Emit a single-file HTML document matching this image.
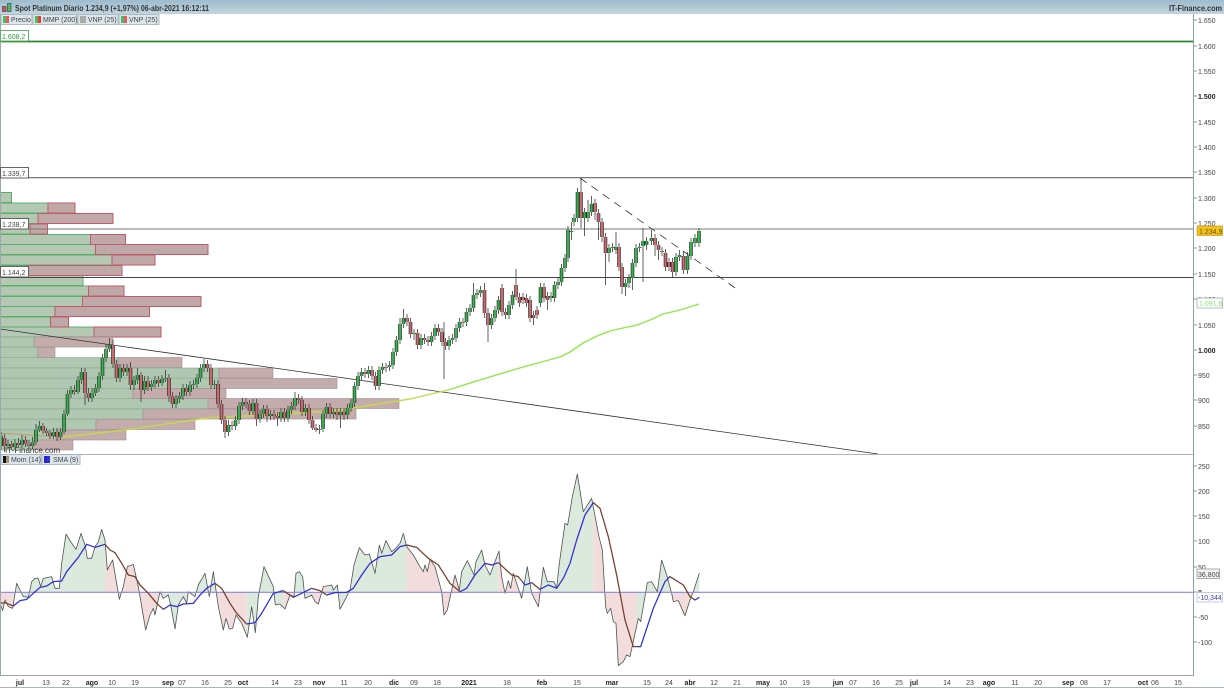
<!DOCTYPE html>
<html><head><meta charset="utf-8"><title>Spot Platinum</title>
<style>
html,body{margin:0;padding:0;background:#fff;width:1224px;height:688px;overflow:hidden}
svg{display:block;filter:blur(.28px)}
text{font-family:"Liberation Sans",Arial,sans-serif;font-size:7px;fill:#444}
.b{font-weight:bold;fill:#222}
.c text{text-anchor:middle}
.ax line{stroke:#8a9aa5;stroke-width:1}
</style></head><body>
<svg width="1224" height="688" viewBox="0 0 1224 688" xmlns="http://www.w3.org/2000/svg">
<defs>
<linearGradient id="hd" x1="0" y1="0" x2="0" y2="1"><stop offset="0" stop-color="#9dbccd"/><stop offset="1" stop-color="#c2d5df"/></linearGradient>
<clipPath id="top"><rect x="0" y="0" width="1194" height="454"/></clipPath>
<clipPath id="br"><rect x="0" y="0" width="40" height="700"/><rect x="315" y="0" width="175" height="700"/><rect x="645" y="0" width="95" height="700"/><rect x="850" y="0" width="30" height="700"/><rect x="935" y="0" width="45" height="700"/><rect x="1220" y="0" width="160" height="700"/><rect x="1495" y="0" width="70" height="700"/><rect x="1595" y="0" width="25" height="700"/><rect x="1780" y="0" width="130" height="700"/><rect x="2010" y="0" width="75" height="700"/></clipPath>
<clipPath id="bl"><rect x="40" y="0" width="275" height="700"/><rect x="490" y="0" width="155" height="700"/><rect x="740" y="0" width="110" height="700"/><rect x="880" y="0" width="55" height="700"/><rect x="980" y="0" width="240" height="700"/><rect x="1380" y="0" width="115" height="700"/><rect x="1565" y="0" width="30" height="700"/><rect x="1620" y="0" width="160" height="700"/><rect x="1910" y="0" width="100" height="700"/><rect x="2085" y="0" width="20" height="700"/></clipPath>
<path id="mom" d="M0 460L8 482 15 450 25 470 38 475 50 400 60 420 70 440 85 442 95 395 105 385 115 385 122 410 130 385 155 380 165 415 178 415 185 340 198 252 212 275 228 298 243 250 255 285 262 325 275 325 285 290 295 275 305 238 315 270 322 360 338 330 358 448 370 410 382 350 400 343 415 410 437 540 450 495 460 475 465 495 480 425 490 445 505 435 512 465 525 537 535 465 550 440 560 460 565 425 585 440 595 405 615 370 628 440 640 365 655 470 670 540 678 505 688 537 698 535 708 495 725 520 742 562 755 470 766 548 775 440 792 350 820 410 826 465 840 462 855 477 870 435 882 440 888 370 898 365 908 380 915 445 935 435 945 455 955 462 970 410 995 405 1000 420 1012 405 1020 478 1040 440 1050 420 1062 345 1078 293 1095 315 1108 312 1125 370 1138 285 1145 310 1158 272 1175 305 1185 297 1200 280 1210 250 1220 290 1240 315 1260 350 1270 365 1275 345 1282 365 1290 328 1305 350 1325 425 1332 495 1342 480 1365 375 1378 420 1385 365 1402 332 1422 375 1428 335 1445 300 1455 345 1470 375 1497 303 1505 380 1515 430 1525 392 1532 415 1540 370 1565 445 1582 350 1595 430 1615 470 1630 352 1642 395 1662 395 1670 415 1678 340 1695 220 1703 225 1717 140 1732 72 1750 185 1775 145 1797 260 1807 300 1817 470 1822 490 1832 475 1840 515 1848 520 1855 647 1870 635 1880 615 1890 620 1915 505 1922 515 1942 398 1955 395 1972 425 1985 330 2000 375 2015 430 2020 455 2035 452 2055 497 2070 450 2080 425 2098 370"/>
<path id="sma" d="M0 460L15 458 40 468 60 452 80 448 100 430 120 412 140 408 160 395 185 393 200 365 235 322 260 283 285 292 315 283 330 300 345 308 365 340 385 375 405 380 420 405 445 430 470 460 490 478 510 465 530 470 550 462 580 460 600 435 620 415 645 400 665 415 690 460 710 490 740 522 765 518 785 490 820 430 850 422 880 442 905 430 935 415 960 422 980 435 1005 428 1040 427 1060 415 1085 375 1110 340 1140 320 1175 315 1200 290 1220 285 1250 292 1285 325 1315 345 1350 400 1380 425 1400 415 1425 375 1455 340 1475 345 1495 338 1535 375 1555 380 1575 405 1595 398 1620 418 1645 405 1670 415 1690 385 1710 340 1730 270 1755 195 1780 158 1800 175 1825 260 1850 375 1875 510 1900 590 1922 590 1960 475 1995 395 2010 380 2050 405 2070 440 2085 450 2098 442"/>
<path id="momfill" d="M0 427L0 460 8 482 15 450 25 470 38 475 50 400 60 420 70 440 85 442 95 395 105 385 115 385 122 410 130 385 155 380 165 415 178 415 185 340 198 252 212 275 228 298 243 250 255 285 262 325 275 325 285 290 295 275 305 238 315 270 322 360 338 330 358 448 370 410 382 350 400 343 415 410 437 540 450 495 460 475 465 495 480 425 490 445 505 435 512 465 525 537 535 465 550 440 560 460 565 425 585 440 595 405 615 370 628 440 640 365 655 470 670 540 678 505 688 537 698 535 708 495 725 520 742 562 755 470 766 548 775 440 792 350 820 410 826 465 840 462 855 477 870 435 882 440 888 370 898 365 908 380 915 445 935 435 945 455 955 462 970 410 995 405 1000 420 1012 405 1020 478 1040 440 1050 420 1062 345 1078 293 1095 315 1108 312 1125 370 1138 285 1145 310 1158 272 1175 305 1185 297 1200 280 1210 250 1220 290 1240 315 1260 350 1270 365 1275 345 1282 365 1290 328 1305 350 1325 425 1332 495 1342 480 1365 375 1378 420 1385 365 1402 332 1422 375 1428 335 1445 300 1455 345 1470 375 1497 303 1505 380 1515 430 1525 392 1532 415 1540 370 1565 445 1582 350 1595 430 1615 470 1630 352 1642 395 1662 395 1670 415 1678 340 1695 220 1703 225 1717 140 1732 72 1750 185 1775 145 1797 260 1807 300 1817 470 1822 490 1832 475 1840 515 1848 520 1855 647 1870 635 1880 615 1890 620 1915 505 1922 515 1942 398 1955 395 1972 425 1985 330 2000 375 2015 430 2020 455 2035 452 2055 497 2070 450 2080 425 2098 370 2098 427Z"/>
<path id="g" d="M1 436V446M8 444V446M15 443V447M22 440V445M32.500 442V446M36 430V442M39.500 426V430M53.500 432V436M60.500 432V437M64 414V432M67.500 394V414M71 390V394M78 380V392M81.500 372V380M92 393V398M95.500 388V393M99 376V388M102.500 358V376M106 349V358M109.500 345V349M120 368V378M127 368V372M134 380V385M137.500 375V380M144.500 381V390M151.500 384V387M155 380V384M162 379V383M165.500 378V379M176 399V404M179.500 396V399M183 388V396M190 385V392M193.500 384V385M197 378V384M200.500 368V378M204 364V368M214.500 384V385M228.500 425V432M235.500 420V426M239 406V420M242.500 402V406M253 403V411M260 414V419M263.500 409V414M270.500 414V416M281 412V418M288 410V418M291.500 406V410M295 398V406M305.500 408V412M319.500 429V430M323 414V429M326.500 407V414M333.500 412V414M340.500 412V415M347.500 408V415M351 403V408M354.500 386V403M358 376V386M361.500 372V376M368.500 370V374M379 370V386M382.500 367V370M389.500 365V367M393 352V365M396.500 340V352M400 324V340M403.500 318V324M414 333V334M421 338V345M431.500 336V342M435 328V336M449 340V346M452.500 338V340M456 328V338M459.500 322V328M466.500 312V322M470 308V312M473.500 295V308M477 293V295M480.500 290V293M491.500 318V325M495 310V318M498.500 300V310M509 305V315M512.500 295V305M540.500 287V303M551 296V298M554.500 285V298M558 282V285M561.500 268V282M565 258V268M568 230V258M571.500 231V232M574 218V222M577.500 192V218M584.500 212V218M588 212V218M591.500 204V212M609 248V253M612.500 247V248M616 247V250M625.500 283V287M629 278V283M632.500 263V278M636 248V263M639.500 247V248M643 241V246M646.500 241V245M651.500 238V241M662 251V252M676 257V272M679.500 255V257M687.500 256V270M691 242V256M695 238V243M699 231V243"/>
<path id="r" d="M4.500 438V446M11.500 444V447M18.500 443V445M25.500 440V444M29 444V446M43 426V431M46.500 431V433M50 433V436M57 432V437M74.500 390V392M85 372V393M88.500 393V398M113 345V364M116.500 364V378M123.500 368V372M130.500 368V385M141 375V390M148 381V387M158.500 380V383M169 378V396M172.500 396V404M186.500 388V392M207.500 364V368M211 368V385M218 384V404M221.500 404V420M225 420V432M232 425V426M246 402V404M249.500 404V411M256.500 403V419M267 409V416M274 414V416M277.500 416V418M284.500 412V418M298.500 398V400M302 400V412M309 408V420M312.500 420V428M316 428V430M330 407V414M337 412V415M344 412V415M365 372V374M372 370V376M375.500 376V386M386 367V368M407 318V322M410.500 322V334M417.500 333V345M424.500 338V340M428 340V342M438.500 328V332M442 332V342M445.500 342V346M463 322V323M484.500 290V313M488 313V325M502 288V312M505.500 312V315M516 285V297M519.500 297V303M523 297V300M526.500 298V303M530 300V318M533.500 315V318M537 310V315M544 287V298M547.500 296V300M581 192V218M595 203V212M598.500 213V222M602 222V237M605.500 237V253M619 247V267M622 267V287M655 238V245M658.500 245V250M665.500 253V267M669 262V267M672.500 262V272M683.500 256V270"/>
</defs>

<!-- price panel -->
<g clip-path="url(#top)">
<g stroke-width="1">
<g fill="#b4c8b4" stroke="#58b068"><rect x="-2" y="192.500" width="13.500" height="10"/><rect x="-2" y="203" width="50" height="10"/><rect x="-2" y="213.500" width="40" height="10"/><rect x="-2" y="224" width="32" height="10"/><rect x="-2" y="234.500" width="92.500" height="10"/><rect x="-2" y="244.500" width="97.500" height="10"/><rect x="-2" y="255" width="114" height="10"/><rect x="-2" y="265.500" width="30" height="10"/><rect x="-2" y="275.500" width="85" height="10"/><rect x="-2" y="286" width="90.500" height="10"/><rect x="-2" y="296.500" width="84.500" height="10"/><rect x="-2" y="306.500" width="57" height="10"/><rect x="-2" y="317" width="52.500" height="10"/><rect x="-2" y="327" width="96" height="10"/></g>
<g fill="#bfa8a8" stroke="#c05a68"><rect x="48" y="203" width="27" height="10"/><rect x="38" y="213.500" width="75" height="10"/><rect x="30" y="224" width="17.500" height="10"/><rect x="90.500" y="234.500" width="35" height="10"/><rect x="95.500" y="244.500" width="112.500" height="10"/><rect x="112" y="255" width="43" height="10"/><rect x="28" y="265.500" width="94" height="10"/><rect x="88.500" y="286" width="35.500" height="10"/><rect x="82.500" y="296.500" width="118.500" height="10"/><rect x="55" y="306.500" width="94.500" height="10"/><rect x="50.500" y="317" width="18" height="10"/><rect x="94" y="327" width="67" height="10"/></g>
<g fill="#b0c7b2" stroke="#8cae90" stroke-width=".6"><rect x="-2" y="337" width="36" height="10"/><rect x="-2" y="347.500" width="40" height="10"/><rect x="-2" y="357.500" width="120" height="10"/><rect x="-2" y="368" width="221" height="10"/><rect x="-2" y="378.500" width="222" height="10"/><rect x="-2" y="388.500" width="135" height="10"/><rect x="-2" y="398.500" width="210" height="10"/><rect x="-2" y="409" width="145" height="10"/><rect x="-2" y="419.500" width="98" height="10"/><rect x="-2" y="430" width="60" height="10"/><rect x="-2" y="440" width="36" height="10"/></g>
<g fill="#c4acac" stroke="#a08a8a" stroke-width=".6"><rect x="34" y="337" width="79" height="10"/><rect x="38" y="347.500" width="17" height="10"/><rect x="118" y="357.500" width="64" height="10"/><rect x="219" y="368" width="54" height="10"/><rect x="220" y="378.500" width="117" height="10"/><rect x="133" y="388.500" width="93" height="10"/><rect x="208" y="398.500" width="191" height="10"/><rect x="143" y="409" width="213" height="10"/><rect x="96" y="419.500" width="99" height="10"/><rect x="58" y="430" width="68" height="10"/><rect x="34" y="440" width="39" height="10"/></g>
</g>
<text x="5" y="453" style="font-size:8px;fill:#333">IT-Finance.com</text>

<!-- horizontal lines -->
<line x1="0" y1="41.500" x2="1194" y2="41.500" stroke="#1f8a2e" stroke-width="1.800"/>
<line x1="0" y1="177.700" x2="1194" y2="177.700" stroke="#666" stroke-width="1.100"/>
<line x1="0" y1="229" x2="1194" y2="229" stroke="#777" stroke-width="1.100"/>
<line x1="0" y1="277.500" x2="1194" y2="277.500" stroke="#444" stroke-width=".9"/>
<line x1="0" y1="329" x2="878" y2="454" stroke="#333" stroke-width=".8"/>
<line x1="580" y1="178" x2="738" y2="290" stroke="#333" stroke-width=".8" stroke-dasharray="8 6"/>

<!-- MMP -->
<polyline fill="none" stroke="#bf9a6a" stroke-width="1" points="0,433 30,435 62,437"/>
<polyline fill="none" stroke="#c5d84a" stroke-width="1.400" stroke-linejoin="round" points="62,437 125,430 207,418 300,413 340,410 410,399 448,390"/>
<polyline fill="none" stroke="#8fe84a" stroke-width="1.400" stroke-linejoin="round" points="448,390 483,379 523,367 560,357 570,352 583,343 597,336 610,331 623,328 637,325 650,320 663,314 680,310 699,304"/>

<!-- wicks -->
<path fill="none" stroke="#3a3a3a" stroke-width=".8" d="M1 432V450M4.500 434V452M8 440V449M11.500 441V450M15 439V450M18.500 438V447M22 435V448M25.500 436V447M29 440V449M32.500 437V449M36 424V445M39.500 421V432M43 423V434M46.500 428V436M50 430V439M53.500 428V439M57 428V441M60.500 428V440M64 410V434M67.500 390V416M71 386V398M74.500 385V395M78 376V394M81.500 368V384M85 368V405M88.500 388V402M92 388V402M95.500 384V396M99 372V392M102.500 354V380M106 344V362M109.500 338V352M113 340V368M116.500 360V382M120 364V382M123.500 364V376M127 364V376M130.500 362V390M134 376V390M137.500 368V384M141 372V402M144.500 376V394M148 376V391M151.500 380V391M155 376V388M158.500 376V387M162 375V386M165.500 370V382M169 374V402M172.500 392V408M176 395V408M179.500 392V403M183 384V400M186.500 384V396M190 381V396M193.500 380V389M197 374V388M200.500 364V382M204 359V372M207.500 360V372M211 364V389M214.500 380V389M218 380V408M221.500 400V424M225 416V438M228.500 420V436M232 421V430M235.500 416V430M239 402V424M242.500 398V410M246 398V408M249.500 400V415M253 399V415M256.500 399V426M260 410V423M263.500 405V418M267 405V422M270.500 410V420M274 410V420M277.500 412V426M281 408V422M284.500 408V422M288 406V422M291.500 402V414M295 392V410M298.500 394V404M302 396V416M305.500 404V416M309 404V424M312.500 416V430M316 424V432M319.500 425V434M323 410V432M326.500 403V418M330 403V418M333.500 408V418M337 408V420M340.500 408V428M344 408V420M347.500 404V419M351 399V412M354.500 382V407M358 372V390M361.500 368V380M365 368V378M368.500 366V378M372 366V380M375.500 372V390M379 366V390M382.500 363V374M386 363V372M389.500 361V371M393 348V369M396.500 336V356M400 318V344M403.500 309V328M407 314V326M410.500 318V338M414 329V340M417.500 329V349M421 334V349M424.500 334V344M428 336V346M431.500 332V346M435 324V340M438.500 324V336M442 328V346M445.500 338V350M444 322V379M449 336V350M452.500 334V344M456 324V342M459.500 318V332M463 318V327M466.500 308V326M470 304V316M473.500 283V312M477 289V299M480.500 286V297M484.500 283V318M488 308V342M491.500 314V329M495 306V322M498.500 296V314M502 284V316M505.500 308V319M509 301V319M512.500 291V309M516 269V300M519.500 293V307M523 293V304M526.500 294V307M530 296V322M533.500 311V325M537 306V319M540.500 283V307M544 283V302M547.500 292V310M551 292V302M554.500 281V302M558 278V289M561.500 264V286M565 254V272M568 226V262M571.500 222V240M574 214V226M577.500 188V222M581 178V228M584.500 208V236M588 200V222M591.500 196V216M595 199V220M598.500 209V240M602 218V242M605.500 233V285M609 244V262M612.500 243V252M616 232V254M619 243V271M622 263V294M625.500 279V296M629 274V288M632.500 259V290M636 244V267M639.500 243V252M643 228V282M646.500 237V250M651.500 230V245M655 234V256M658.500 241V260M662 247V256M665.500 249V271M669 258V271M672.500 258V278M676 253V276M679.500 250V261M683.500 252V274M687.500 252V274M691 238V260M695 234V247M699 228V247"/>
<!-- bodies -->
<g fill="none">
<use href="#g" stroke="#161616" stroke-width="3.500"/>
<use href="#r" stroke="#161616" stroke-width="3.500"/>
<use href="#g" stroke="#38b050" stroke-width="2.300"/>
<use href="#r" stroke="#c86a70" stroke-width="2.300"/>
</g>
</g>

<!-- momentum panel -->
<line x1="0" y1="454.500" x2="1194" y2="454.500" stroke="#a9b3b9" stroke-width="1"/>
<g transform="translate(0,450) scale(.33333)">
<g clip-path="url(#bl)"><use href="#momfill" fill="#dbeadc"/></g>
<g clip-path="url(#br)"><use href="#momfill" fill="#f3dcdc"/></g>
<use href="#mom" fill="none" stroke="#4c5450" stroke-width="2.400" stroke-linejoin="round"/>
<line x1="0" y1="427" x2="3582" y2="427" stroke="#8b86d8" stroke-width="3.600"/>
<g clip-path="url(#bl)"><use href="#sma" fill="none" stroke="#3030d4" stroke-width="3.800" stroke-linejoin="round"/></g>
<g clip-path="url(#br)"><use href="#sma" fill="none" stroke="#74402c" stroke-width="3.800" stroke-linejoin="round"/></g>
</g>

<!-- frame -->
<rect x="0" y="0" width="1224" height="14" fill="url(#hd)"/>
<line x1=".5" y1="14" x2=".5" y2="676" stroke="#9aa8b0"/>
<line x1="1193.500" y1="14" x2="1193.500" y2="676" stroke="#8f9fa9"/>
<line x1="0" y1="675.500" x2="1193" y2="675.500" stroke="#9aa8b0"/>
<line x1="0" y1="687.500" x2="1224" y2="687.500" stroke="#aab6bd"/>

<!-- header -->
<rect x="2.500" y="6.500" width="3.500" height="5" fill="#e05060" stroke="#444" stroke-width=".7"/>
<rect x="7.500" y="3.500" width="3.500" height="8" fill="#40c060" stroke="#444" stroke-width=".7"/>
<text x="15" y="11" textLength="194" lengthAdjust="spacingAndGlyphs" style="font-size:8px;font-weight:bold;fill:#333">Spot Platinum Diario 1.234,9 (+1,97%) 06-abr-2021 16:12:11</text>
<text x="1169" y="11" textLength="53" lengthAdjust="spacingAndGlyphs" style="font-size:8px;font-weight:bold;fill:#333">IT-Finance.com</text>

<!-- legends -->
<g fill="#dce6ec" stroke="#9fb0ba" stroke-width=".8"><rect x="1" y="14.500" width="31" height="10"/><rect x="33" y="14.500" width="44" height="10"/><rect x="78" y="14.500" width="40" height="10"/><rect x="119" y="14.500" width="40" height="10"/></g>
<rect x="3" y="16" width="3" height="7" fill="#4dbb60"/><rect x="6" y="16" width="3" height="7" fill="#ea5a5a"/>
<rect x="35" y="16" width="3" height="7" fill="#4dbb60"/><rect x="38" y="16" width="3" height="7" fill="#ea3a3a"/>
<rect x="80" y="16" width="6" height="7" fill="#aaa"/>
<rect x="121" y="16" width="3" height="7" fill="#4dbb60"/><rect x="124" y="16" width="3" height="7" fill="#ea5a5a"/>
<text x="11" y="22">Precio</text><text x="43" y="22">MMP (200)</text><text x="88" y="22">VNP (25)</text><text x="129" y="22">VNP (25)</text>
<g fill="#dce6ec" stroke="#9fb0ba" stroke-width=".8"><rect x="1" y="454.500" width="40" height="10"/><rect x="42" y="454.500" width="38" height="10"/></g>
<rect x="3" y="456" width="3" height="7" fill="#111"/><rect x="6" y="456" width="3" height="7" fill="#a89070"/>
<rect x="44" y="456" width="3" height="7" fill="#2222dd"/><rect x="47" y="456" width="3" height="7" fill="#3333cc"/>
<text x="11" y="462">Mom (14)</text><text x="53" y="462">SMA (9)</text>

<!-- left labels -->
<g fill="#fff" stroke-width=".9">
<rect x=".5" y="30.500" width="28" height="10.500" stroke="#55a860"/>
<rect x=".5" y="167.500" width="28" height="10.500" stroke="#555"/>
<rect x=".5" y="218.500" width="28" height="10.500" stroke="#555"/>
<rect x=".5" y="266.500" width="28" height="10.500" stroke="#555"/>
</g>
<text x="2" y="39" style="fill:#2e9a40">1.608,2</text>
<text x="2" y="176">1.339,7</text>
<text x="2" y="227">1.238,7</text>
<text x="2" y="275">1.144,2</text>

<!-- y axis -->
<g class="ax">
<line x1="1194" x2="1197" y1="20" y2="20"/><line x1="1194" x2="1197" y1="46" y2="46"/><line x1="1194" x2="1197" y1="71" y2="71"/><line x1="1194" x2="1197" y1="96" y2="96"/><line x1="1194" x2="1197" y1="122" y2="122"/><line x1="1194" x2="1197" y1="147" y2="147"/><line x1="1194" x2="1197" y1="172" y2="172"/><line x1="1194" x2="1197" y1="198" y2="198"/><line x1="1194" x2="1197" y1="223" y2="223"/><line x1="1194" x2="1197" y1="248" y2="248"/><line x1="1194" x2="1197" y1="274" y2="274"/><line x1="1194" x2="1197" y1="299" y2="299"/><line x1="1194" x2="1197" y1="325" y2="325"/><line x1="1194" x2="1197" y1="350" y2="350"/><line x1="1194" x2="1197" y1="375" y2="375"/><line x1="1194" x2="1197" y1="400" y2="400"/><line x1="1194" x2="1197" y1="426" y2="426"/>
<line x1="1194" x2="1197" y1="466" y2="466"/><line x1="1194" x2="1197" y1="491" y2="491"/><line x1="1194" x2="1197" y1="516" y2="516"/><line x1="1194" x2="1197" y1="541" y2="541"/><line x1="1194" x2="1197" y1="567" y2="567"/><line x1="1194" x2="1197" y1="592" y2="592"/><line x1="1194" x2="1197" y1="617" y2="617"/><line x1="1194" x2="1197" y1="642" y2="642"/>
</g>
<text x="1198" y="23">1.650</text><text x="1198" y="49">1.600</text><text x="1198" y="74">1.550</text><text x="1198" y="99" class="b">1.500</text><text x="1198" y="125">1.450</text><text x="1198" y="150">1.400</text><text x="1198" y="175">1.350</text><text x="1198" y="201">1.300</text><text x="1198" y="226">1.250</text><text x="1198" y="251">1.200</text><text x="1198" y="277">1.150</text><text x="1198" y="302">1.100</text><text x="1198" y="328">1.050</text><text x="1198" y="353" class="b">1.000</text><text x="1198" y="378">950</text><text x="1198" y="403">900</text><text x="1198" y="429">850</text>
<text x="1198" y="469">250</text><text x="1198" y="494">200</text><text x="1198" y="519">150</text><text x="1198" y="544">100</text><text x="1198" y="570">50</text><text x="1198" y="595" class="b">0</text><text x="1198" y="620">-50</text><text x="1198" y="645">-100</text>

<rect x="1197" y="226" width="25.500" height="9.500" fill="#f4c21c" stroke="#c09a20" stroke-width=".7"/>
<text x="1199" y="234" style="fill:#6a5400">1.234,9</text>
<rect x="1197" y="298" width="25.500" height="10" fill="#fff" stroke="#9fb0a8" stroke-width=".8"/>
<text x="1199" y="306" style="fill:#88e878">1.091,8</text>
<rect x="1197" y="569" width="22.500" height="9.500" fill="#f4f4f4" stroke="#999" stroke-width=".8"/>
<text x="1198" y="577">36,800</text>
<rect x="1197" y="592.500" width="25.500" height="9.500" fill="#fff" stroke="#b8c0e0" stroke-width=".8"/>
<text x="1198" y="600" style="fill:#3a3ad0">-10,344</text>

<!-- x axis -->
<g class="c">
<text x="20" y="685" class="b">jul</text><text x="46" y="685">13</text><text x="66" y="685">22</text><text x="92" y="685" class="b">ago</text><text x="112" y="685">10</text><text x="135" y="685">19</text><text x="168" y="685" class="b">sep</text><text x="182" y="685">07</text><text x="205" y="685">16</text><text x="228" y="685">25</text><text x="243" y="685" class="b">oct</text><text x="275" y="685">14</text><text x="298" y="685">23</text><text x="319" y="685" class="b">nov</text><text x="344" y="685">11</text><text x="368" y="685">20</text><text x="394" y="685" class="b">dic</text><text x="414" y="685">09</text><text x="437" y="685">18</text><text x="469" y="685" class="b">2021</text><text x="507" y="685">18</text><text x="542" y="685" class="b">feb</text><text x="577" y="685">15</text><text x="612" y="685" class="b">mar</text><text x="647" y="685">15</text><text x="669" y="685">24</text><text x="690" y="685" class="b">abr</text><text x="714" y="685">12</text><text x="737" y="685">21</text><text x="763" y="685" class="b">may</text><text x="783" y="685">10</text><text x="806" y="685">19</text><text x="838" y="685" class="b">jun</text><text x="853" y="685">07</text><text x="876" y="685">16</text><text x="899" y="685">25</text><text x="914" y="685" class="b">jul</text><text x="947" y="685">14</text><text x="970" y="685">23</text><text x="989" y="685" class="b">ago</text><text x="1015" y="685">11</text><text x="1038" y="685">20</text><text x="1068" y="685" class="b">sep</text><text x="1084" y="685">08</text><text x="1107" y="685">17</text><text x="1143" y="685" class="b">oct</text><text x="1155" y="685">06</text><text x="1178" y="685">15</text>
</g>
</svg>
</body></html>
